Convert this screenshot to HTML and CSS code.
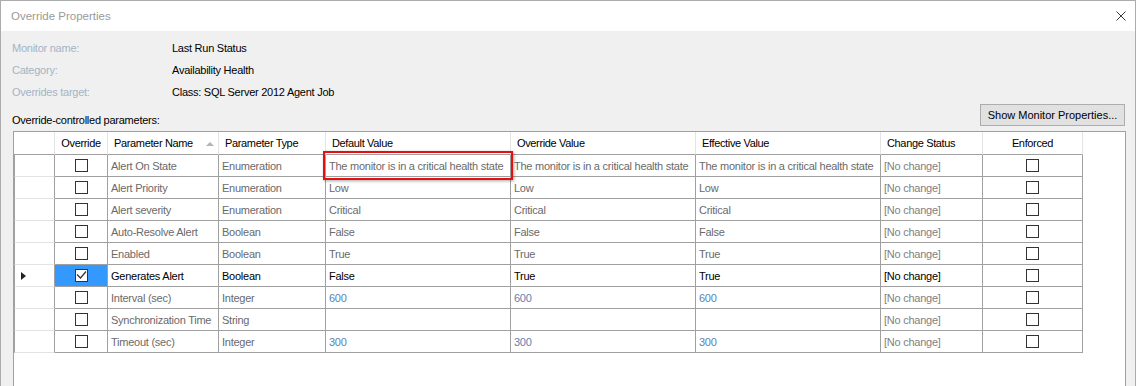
FILE: index.html
```html
<!DOCTYPE html>
<html>
<head>
<meta charset="utf-8">
<link rel="stylesheet" href="styles.css">
</head>
<body>
<div class="window">
  <div class="titlebar">
    <span class="title">Override Properties</span>
    <svg class="close" width="10" height="10" viewBox="0 0 10 10"><path d="M0.5 0.5L9.5 9.5M9.5 0.5L0.5 9.5" stroke="#3c3c3c" stroke-width="1" fill="none"/></svg>
  </div>
  <div class="content">
    <div class="info">
      <div class="info-row"><span class="lbl">Monitor name:</span><span class="val">Last Run Status</span></div>
      <div class="info-row"><span class="lbl">Category:</span><span class="val">Availability Health</span></div>
      <div class="info-row"><span class="lbl">Overrides target:</span><span class="val">Class: SQL Server 2012 Agent Job</span></div>
    </div>
    <div class="params-bar">
      <span class="params-label">Override-controlled parameters:</span>
      <button class="btn">Show Monitor Properties...</button>
    </div>
    <div class="grid">
      <div class="row head">
        <div class="c rh"></div>
        <div class="c center">Override</div>
        <div class="c sort"><span>Parameter Name</span><svg width="8" height="4" viewBox="0 0 8 4"><path d="M0 4L4 0L8 4Z" fill="#b4b4b4"/></svg></div>
        <div class="c">Parameter Type</div>
        <div class="c">Default Value</div>
        <div class="c">Override Value</div>
        <div class="c">Effective Value</div>
        <div class="c">Change Status</div>
        <div class="c center">Enforced</div>
      </div>

      <div class="row">
        <div class="c rh"></div>
        <div class="c cb"><span class="box"></span></div>
        <div class="c">Alert On State</div>
        <div class="c">Enumeration</div>
        <div class="c">The monitor is in a critical health state</div>
        <div class="c">The monitor is in a critical health state</div>
        <div class="c">The monitor is in a critical health state</div>
        <div class="c st">[No change]</div>
        <div class="c cb"><span class="box"></span></div>
      </div>
      <div class="row">
        <div class="c rh"></div>
        <div class="c cb"><span class="box"></span></div>
        <div class="c">Alert Priority</div>
        <div class="c">Enumeration</div>
        <div class="c">Low</div>
        <div class="c">Low</div>
        <div class="c">Low</div>
        <div class="c st">[No change]</div>
        <div class="c cb"><span class="box"></span></div>
      </div>
      <div class="row">
        <div class="c rh"></div>
        <div class="c cb"><span class="box"></span></div>
        <div class="c">Alert severity</div>
        <div class="c">Enumeration</div>
        <div class="c">Critical</div>
        <div class="c">Critical</div>
        <div class="c">Critical</div>
        <div class="c st">[No change]</div>
        <div class="c cb"><span class="box"></span></div>
      </div>
      <div class="row">
        <div class="c rh"></div>
        <div class="c cb"><span class="box"></span></div>
        <div class="c">Auto-Resolve Alert</div>
        <div class="c">Boolean</div>
        <div class="c">False</div>
        <div class="c">False</div>
        <div class="c">False</div>
        <div class="c st">[No change]</div>
        <div class="c cb"><span class="box"></span></div>
      </div>
      <div class="row">
        <div class="c rh"></div>
        <div class="c cb"><span class="box"></span></div>
        <div class="c">Enabled</div>
        <div class="c">Boolean</div>
        <div class="c">True</div>
        <div class="c">True</div>
        <div class="c">True</div>
        <div class="c st">[No change]</div>
        <div class="c cb"><span class="box"></span></div>
      </div>
      <div class="row active">
        <div class="c rh"><svg class="cur" width="5" height="8" viewBox="0 0 5 8"><path d="M0 0L5 4L0 8Z" fill="#222"/></svg></div>
        <div class="c cb sel"><span class="box"><svg width="11" height="11" viewBox="0 0 11 11"><path d="M1 4.5L4.5 8L10 1.5" stroke="#333" stroke-width="1.2" fill="none"/></svg></span></div>
        <div class="c">Generates Alert</div>
        <div class="c">Boolean</div>
        <div class="c">False</div>
        <div class="c">True</div>
        <div class="c">True</div>
        <div class="c st">[No change]</div>
        <div class="c cb"><span class="box"></span></div>
      </div>
      <div class="row">
        <div class="c rh"></div>
        <div class="c cb"><span class="box"></span></div>
        <div class="c">Interval (sec)</div>
        <div class="c">Integer</div>
        <div class="c num">600</div>
        <div class="c num">600</div>
        <div class="c num">600</div>
        <div class="c st">[No change]</div>
        <div class="c cb"><span class="box"></span></div>
      </div>
      <div class="row">
        <div class="c rh"></div>
        <div class="c cb"><span class="box"></span></div>
        <div class="c">Synchronization Time</div>
        <div class="c">String</div>
        <div class="c"></div>
        <div class="c"></div>
        <div class="c"></div>
        <div class="c st">[No change]</div>
        <div class="c cb"><span class="box"></span></div>
      </div>
      <div class="row">
        <div class="c rh"></div>
        <div class="c cb"><span class="box"></span></div>
        <div class="c">Timeout (sec)</div>
        <div class="c">Integer</div>
        <div class="c num">300</div>
        <div class="c num">300</div>
        <div class="c num">300</div>
        <div class="c st">[No change]</div>
        <div class="c cb"><span class="box"></span></div>
      </div>

      <div class="highlight"></div>
    </div>
  </div>
</div>
</body>
</html>
```
FILE: styles.css
```css
* { box-sizing: border-box; }
html, body { margin: 0; padding: 0; background: #f0f0f0; }
body {
  font-family: "Liberation Sans", Arial, sans-serif;
  font-size: 11px;
  color: #000;
}
.window {
  width: 1136px;
  height: 386px;
  border: 1px solid #acacac;
  border-bottom: none;
  background: #f0f0f0;
  display: flex;
  flex-direction: column;
  overflow: hidden;
}
.titlebar {
  height: 30px;
  flex: none;
  background: #fff;
  display: flex;
  align-items: center;
  justify-content: space-between;
  padding: 0 9px 0 10px;
}
.title {
  font-size: 11.5px;
  color: #9a9a9a;
  padding-bottom: 1px;
}
.close { display: block; margin-bottom: 1px; }
.content {
  flex: 1;
  display: flex;
  flex-direction: column;
  min-height: 0;
}
.info {
  padding: 6px 0 0 11px;
}
.info-row {
  display: flex;
  height: 22px;
  line-height: 22px;
  letter-spacing: -0.25px;
}
.lbl { width: 160px; color: #a3b4c6; }
.val { color: #000; }
.params-bar {
  display: flex;
  justify-content: space-between;
  margin-top: 1px;
  padding-left: 11px;
  padding-right: 10px;
}
.params-label {
  align-self: flex-end;
  line-height: 14px;
  margin-bottom: -1px;
  letter-spacing: -0.25px;
}
.btn {
  width: 145px;
  height: 22px;
  padding: 0;
  margin: 0;
  background: #e1e1e1;
  border: 1px solid #adadad;
  font-family: "Liberation Sans", Arial, sans-serif;
  font-size: 11px;
  color: #000;
  line-height: 20px;
}
.grid {
  flex: 1;
  margin: 5px 9px 0 12px;
  background: #fff;
  border: 1px solid #a0a0a0;
  border-bottom: none;
  position: relative;
}
.row {
  display: grid;
  grid-template-columns: 41px 53px 111px 107px 185px 185px 185px 102px 100px;
  height: 22px;
}
.c {
  border-right: 1px solid #a0a0a0;
  border-bottom: 1px solid #a0a0a0;
  padding-left: 3px;
  line-height: 22px;
  white-space: nowrap;
  overflow: hidden;
  color: #6a6a6a;
  letter-spacing: -0.25px;
}
.row.head { height: 23px; }
.row.head .c {
  color: #000;
  line-height: 22px;
  padding-left: 6px;
  border-right-color: #e4e4e4;
  letter-spacing: -0.35px;
}
.row.head .c.center { padding-left: 0; text-align: center; }
.row.head .c.rh { border-left: none; border-bottom-color: #a0a0a0; }
.sort {
  display: flex;
  align-items: center;
  justify-content: space-between;
  padding-right: 4px;
}
.sort svg { display: block; margin-top: 1px; }
.rh {
  border-left: 1px solid #a0a0a0;
  border-bottom-color: #e3e3e3;
  padding-left: 0;
  display: flex;
  align-items: center;
}
.cur { display: block; margin-left: 6px; }
.cb {
  padding-left: 0;
  display: flex;
  align-items: center;
  justify-content: center;
}
.box {
  width: 13px;
  height: 13px;
  border: 1px solid #333;
  background: #fff;
  display: block;
}
.box svg { display: block; }
.sel { background: #3399ff; }
.st { color: #7f7f7f; }
.num { color: #5b82b5; }
.row.active .c { color: #000; }
.highlight {
  position: absolute;
  left: 309px;
  top: 19px;
  width: 190px;
  height: 29px;
  border: 2px solid #e31010;
  box-shadow: 1px 1px 3px rgba(0, 0, 0, 0.35);
  pointer-events: none;
}
```
